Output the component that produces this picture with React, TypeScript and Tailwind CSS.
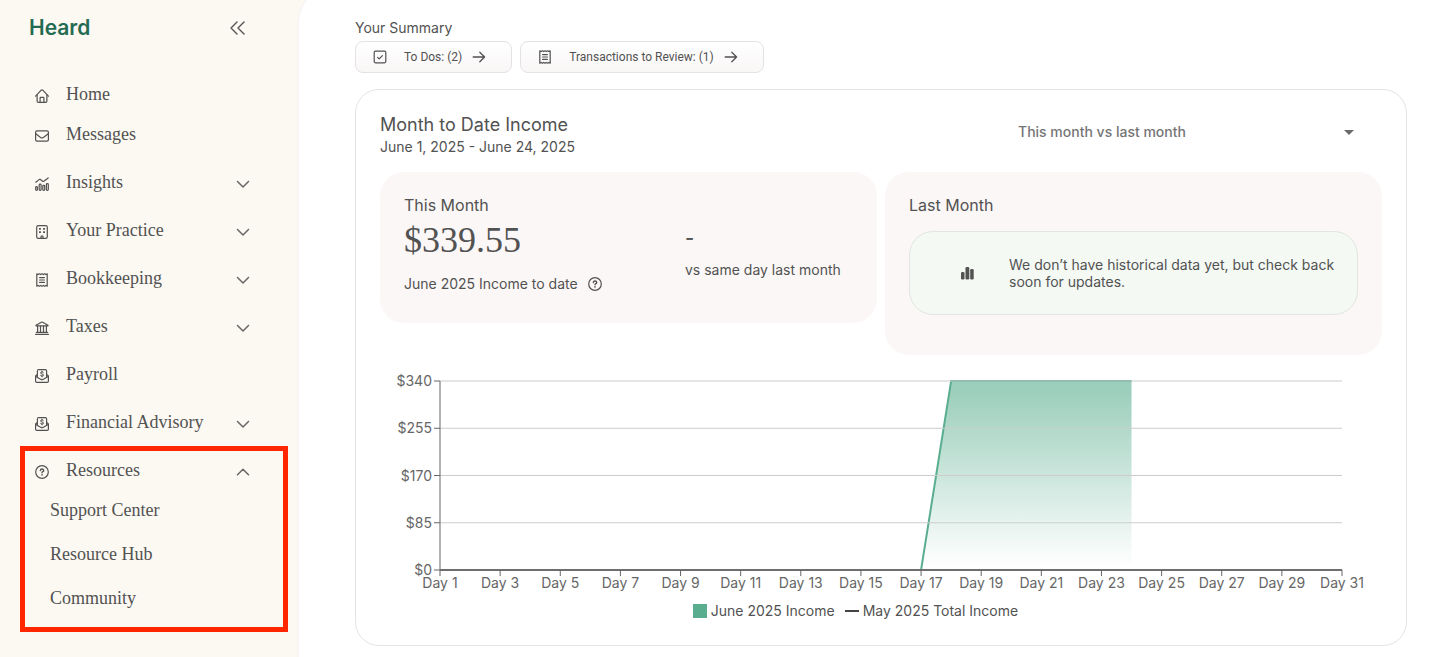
import type { ReactNode } from 'react';

const INK = '#525252';

function Icon({ children }: { children: ReactNode }) {
  return (
    <svg
      width="14"
      height="14"
      viewBox="0 0 14 14"
      fill="none"
      stroke="currentColor"
      strokeWidth="1.2"
      strokeLinecap="round"
      strokeLinejoin="round"
      className="shrink-0"
      aria-hidden="true"
    >
      {children}
    </svg>
  );
}

const HomeIcon = () => (
  <Icon>
    <path d="M0.6 7.2 6.2 1.2Q7 0.5 7.8 1.2L13.4 7.2" />
    <path d="M2.1 6v6.1q0 1.3 1.3 1.3h7.2q1.3 0 1.3-1.3V6" />
    <path d="M5.1 13.2V8.9q0-.6.6-.6h2.6q.6 0 .6.6v4.3" />
  </Icon>
);

const MailIcon = () => (
  <Icon>
    <rect x="0.6" y="1.9" width="12.8" height="10.2" rx="1.4" />
    <path d="M0.8 4.8 5.6 8.4Q7 9.4 8.4 8.4L13.2 4.8" />
  </Icon>
);

const InsightsIcon = () => (
  <Icon>
    <path d="M0.8 5.2 4.4 2.4Q5 2 5.5 2.5L7.6 4.3Q8.1 4.7 8.7 4.3L13.2 1" />
    <rect x="0.7" y="9.6" width="1.7" height="3.8" rx="0.8" />
    <rect x="4.2" y="7.2" width="1.9" height="6.2" rx="0.8" />
    <rect x="7.8" y="8.4" width="1.9" height="5" rx="0.8" />
    <rect x="11.4" y="6.6" width="1.9" height="6.8" rx="0.8" />
  </Icon>
);

const BuildingIcon = () => (
  <Icon>
    <rect x="1.7" y="0.6" width="10.6" height="12.8" rx="1.6" />
    <path d="M6 13.2v-1.4q0-.9 1-.9t1 .9v1.4" />
    <g fill="currentColor" stroke="none">
      <rect x="4" y="3" width="1.9" height="1.7" rx=".3" />
      <rect x="8.1" y="3" width="1.9" height="1.7" rx=".3" />
      <rect x="4" y="6.3" width="1.9" height="1.7" rx=".3" />
      <rect x="8.1" y="6.3" width="1.9" height="1.7" rx=".3" />
    </g>
  </Icon>
);

const ReceiptIcon = () => (
  <Icon>
    <path d="M1.8 .8l1.3.8L4.4 .8l1.3.8L7 .8l1.3.8L9.6 .8l1.3.8 1.3-.8v12.4l-1.3-.8-1.3.8-1.3-.8L7 13.2l-1.3-.8-1.3.8-1.3-.8-1.3.8z" />
    <path d="M4.6 4.6h4.8M4.6 7h4.8M4.6 9.4h4.8" />
  </Icon>
);

const BankIcon = () => (
  <Icon>
    <path d="M1 4.8V4.2L6.4 1.2Q7 .9 7.6 1.2L13 4.2v.6z" />
    <path d="M2.6 5.2v6M5.5 5.2v6M8.5 5.2v6M11.4 5.2v6M1.4 11.4h11.2M.6 13.4h12.8" />
  </Icon>
);

const PayrollIcon = () => (
  <Icon>
    <path d="M2.4 7.6V1.9q0-1.3 1.3-1.3h6.6q1.3 0 1.3 1.3v5.7" />
    <path d="M2 5.8.6 7v5.2q0 1.2 1.2 1.2h10.4q1.2 0 1.2-1.2V7L12 5.8" />
    <path d="M.8 7.4 6 10.4q1 .6 2 0l5.2-3" />
    <path strokeWidth="1" d="M8.4 3.5Q8 2.9 7 2.9q-1.4 0-1.4 1Q5.6 4.8 7 5q1.5.2 1.5 1.1 0 1-1.5 1-1.1 0-1.5-.7M7 2.2v.7M7 7.1v.8" />
  </Icon>
);

const HelpIcon = () => (
  <Icon>
    <circle cx="7" cy="7" r="6.3" />
    <path strokeWidth="1.4" d="M5.3 5.5Q5.5 4 7 4t1.7 1.4Q8.7 6.3 7.7 6.7 7 7 7 7.7" />
    <circle cx="7" cy="9.9" r=".8" fill="currentColor" stroke="none" />
  </Icon>
);

const CheckboxIcon = () => (
  <Icon>
    <rect x="1.2" y="1.2" width="11.6" height="11.6" rx="1.2" />
    <path d="M4.6 7.4 6.2 8.9 9.4 5.6" />
  </Icon>
);

const ArrowIcon = () => (
  <Icon>
    <path strokeWidth="1.3" d="M1.2 7h11.4M7.8 2.2 12.6 7 7.8 11.8" />
  </Icon>
);

function Chevron({ up = false }: { up?: boolean }) {
  return (
    <svg width="14" height="14" viewBox="0 0 14 14" fill="none" stroke="#666" strokeWidth="1.5" strokeLinecap="round" strokeLinejoin="round" aria-hidden="true">
      <path d={up ? 'M1.5 9.8 7 4.3l5.5 5.5' : 'M1.5 4.5 7 10l5.5-5.5'} />
    </svg>
  );
}

const sections = [
  { label: 'Insights', icon: <InsightsIcon />, expandable: true },
  { label: 'Your Practice', icon: <BuildingIcon />, expandable: true },
  { label: 'Bookkeeping', icon: <ReceiptIcon />, expandable: true },
  { label: 'Taxes', icon: <BankIcon />, expandable: true },
  { label: 'Payroll', icon: <PayrollIcon />, expandable: false },
  { label: 'Financial Advisory', icon: <PayrollIcon />, expandable: true },
];

function NavLink({ label, icon }: { label: string; icon: ReactNode }) {
  return (
    <a href="#" className="flex h-10 items-center gap-[17px] pl-[35px]">
      <span className="pt-1">{icon}</span>
      {label}
    </a>
  );
}

function Sidebar() {
  return (
    <aside className="w-[299px] shrink-0 text-[#525252]">
      <div className="flex h-14 items-center justify-between pr-[54px] pl-[29px]">
        <a href="#" className="text-[21px] font-semibold text-[#246b53]">
          Heard
        </a>
        <button type="button" aria-label="Collapse menu">
          <svg width="15" height="14" viewBox="0 0 15 14" fill="none" stroke="currentColor" strokeWidth="1.4" strokeLinecap="round" strokeLinejoin="round">
            <path d="M7 1 1 7l6 6M14 1 8 7l6 6" />
          </svg>
        </button>
      </div>

      <nav className="pt-[18px] font-['Liberation_Serif',serif] text-lg">
        <NavLink label="Home" icon={<HomeIcon />} />
        <NavLink label="Messages" icon={<MailIcon />} />
        <div className="pt-1">
          {sections.map((s) =>
            s.expandable ? (
              <button key={s.label} type="button" className="flex h-12 w-full items-center gap-[17px] pr-[49px] pl-[35px]">
                <span className="pt-1">{s.icon}</span>
                {s.label}
                <span className="ml-auto pt-1">
                  <Chevron />
                </span>
              </button>
            ) : (
              <a key={s.label} href="#" className="flex h-12 items-center gap-[17px] pl-[35px]">
                <span className="pt-1">{s.icon}</span>
                {s.label}
              </a>
            ),
          )}
        </div>

        <div className="mr-[11px] ml-5 border-[5px] border-[#ff2600] pb-[7px]">
          <button type="button" className="flex h-[37px] w-full items-center gap-[17px] pr-[33px] pl-[10px]" aria-expanded="true">
            <span className="pt-1">
              <HelpIcon />
            </span>
            Resources
            <span className="ml-auto pt-1">
              <Chevron up />
            </span>
          </button>
          {['Support Center', 'Resource Hub', 'Community'].map((label) => (
            <a key={label} href="#" className="flex h-11 items-center pl-[25px]">
              {label}
            </a>
          ))}
        </div>
      </nav>
    </aside>
  );
}

function SummaryButton({ label, icon }: { label: string; icon: ReactNode }) {
  return (
    <button
      type="button"
      className="flex h-8 items-center rounded-lg border border-[#e4e2e2] bg-linear-to-b from-white to-[#f9f6f6] pr-[25px] pl-[17px] font-[Roboto,sans-serif] text-xs"
    >
      {icon}
      <span className="pr-[10px] pl-[17px]">{label}</span>
      <ArrowIcon />
    </button>
  );
}

// plot area inside the 1002x235 chart
const LEFT = 60;
const RIGHT = 962;
const TOP = 18;
const BOTTOM = 207;
const dayX = (day: number) => LEFT + ((day - 1) * (RIGHT - LEFT)) / 30;
const amountY = (amount: number) => BOTTOM - (amount * (BOTTOM - TOP)) / 340;

const days = Array.from({ length: 16 }, (_, i) => i * 2 + 1);
const amounts = [340, 255, 170, 85, 0];

function IncomeChart() {
  return (
    <svg viewBox="0 0 1002 235" className="mt-2 block w-full font-[Inter,sans-serif] text-sm" role="img" aria-label="Income by day">
      <defs>
        <linearGradient id="income" x1="0" y1="0" x2="0" y2="1">
          <stop offset="5%" stopColor="#5aae8f" stopOpacity="0.6" />
          <stop offset="98%" stopColor="#5aae8f" stopOpacity="0" />
        </linearGradient>
        <clipPath id="plot">
          <rect x={LEFT} y={TOP - 1} width={RIGHT - LEFT} height={BOTTOM - TOP + 1} />
        </clipPath>
      </defs>
      <g clipPath="url(#plot)">
        <path d={`M${dayX(17)} ${BOTTOM}L${dayX(18)} ${TOP}H${dayX(24)}V${BOTTOM}Z`} fill="url(#income)" />
        <path d={`M${dayX(17)} ${BOTTOM}L${dayX(18)} ${TOP}H${dayX(24)}`} fill="none" stroke="#5aae8f" strokeWidth="2" />
      </g>
      {amounts.map((a) => (
        <line key={a} x1={LEFT} x2={RIGHT} y1={amountY(a)} y2={amountY(a)} stroke="#ccc" />
      ))}
      <line x1={LEFT} x2={LEFT} y1={TOP} y2={BOTTOM} stroke="#666" />
      <line x1={LEFT} x2={RIGHT} y1={BOTTOM} y2={BOTTOM} stroke="#6e6e6e" strokeWidth="2" />
      {amounts.map((a) => (
        <g key={a}>
          <line x1={LEFT - 6} x2={LEFT} y1={amountY(a)} y2={amountY(a)} stroke="#666" />
          <text x={LEFT - 8} y={amountY(a) + 5} textAnchor="end" fill="#666">
            ${a}
          </text>
        </g>
      ))}
      {days.map((d) => (
        <g key={d}>
          <line x1={dayX(d)} x2={dayX(d)} y1={BOTTOM} y2={BOTTOM + 6} stroke="#666" />
          <text x={dayX(d)} y={BOTTOM + 18} textAnchor="middle" fill="#666">
            Day {d}
          </text>
        </g>
      ))}
    </svg>
  );
}

function IncomeCard() {
  return (
    <section className="mt-4 rounded-3xl border border-[#e4e4e4] px-6 pb-6">
      <div className="flex items-start justify-between pt-6">
        <div>
          <h2 className="text-lg leading-[22px]">Month to Date Income</h2>
          <p className="text-sm leading-[22px]">June 1, 2025 - June 24, 2025</p>
        </div>
        <div className="relative w-[380px]">
          <select
            aria-label="Comparison period"
            className="h-9 w-full appearance-none bg-transparent pl-4 text-sm font-medium text-[#757575]"
          >
            <option>This month vs last month</option>
          </select>
          <svg width="10" height="5" viewBox="0 0 10 5" className="pointer-events-none absolute top-4 right-7" fill="#6b6b6b">
            <path d="M0 0h10L5 5z" />
          </svg>
        </div>
      </div>

      <div className="mt-[14px] grid grid-cols-2 items-start gap-2">
        <div className="flex rounded-3xl bg-[#fbf7f6] px-6 pt-[23px] pb-7">
          <div className="w-[281px]">
            <h3 className="text-base leading-5">This Month</h3>
            <p className="font-['Liberation_Serif',serif] text-4xl leading-[50px]">$339.55</p>
            <p className="flex items-center gap-[10px] pt-2 text-sm leading-[22px]">
              June 2025 Income to date <HelpIcon />
            </p>
          </div>
          <div className="pt-8">
            <p className="text-xl leading-[22px] font-medium">-</p>
            <p className="pt-[11px] text-sm leading-5">vs same day last month</p>
          </div>
        </div>

        <div className="rounded-3xl bg-[#fbf7f6] px-6 pt-[23px] pb-10">
          <h3 className="text-base leading-5">Last Month</h3>
          <div className="mt-4 flex h-21 items-center gap-[35px] rounded-3xl border border-[#e2e5e2] bg-[#f4f9f4] pr-4 pl-[51px]">
            <svg width="13" height="13" viewBox="0 0 13 13" fill={INK} className="shrink-0" aria-hidden="true">
              <rect x="0" y="5" width="3.5" height="7.5" rx="1.3" />
              <rect x="4.5" y="0" width="3.8" height="12.5" rx="1.3" />
              <rect x="9.2" y="2" width="3.5" height="10.5" rx="1.3" />
            </svg>
            <p className="max-w-[340px] text-sm leading-[17px]">We don’t have historical data yet, but check back soon for updates.</p>
          </div>
        </div>
      </div>

      <IncomeChart />

      <div className="flex justify-center gap-[10px] pt-[3px] pr-[51px] text-sm leading-5">
        <span className="flex items-center gap-1">
          <span className="size-[14px] bg-[#5aae8f]" />
          June 2025 Income
        </span>
        <span className="flex items-center gap-1">
          <span className="h-[2px] w-[14px] bg-[#444]" />
          May 2025 Total Income
        </span>
      </div>
    </section>
  );
}

export default function App() {
  return (
    <div className="flex min-h-screen overflow-hidden bg-[#fcf9f2] font-[Inter,sans-serif]">
      <Sidebar />
      <main className="-mt-4 min-w-0 flex-1 rounded-tl-[40px] bg-white pt-[34px] pr-[35px] pb-[11px] pl-14 text-[#525252] shadow-[-2px_0_0_#f9f5f4]">
        <h1 className="mb-[3px] text-sm leading-5">Your Summary</h1>
        <div className="flex gap-2">
          <SummaryButton label="To Dos: (2)" icon={<CheckboxIcon />} />
          <SummaryButton label="Transactions to Review: (1)" icon={<ReceiptIcon />} />
        </div>
        <IncomeCard />
      </main>
    </div>
  );
}
